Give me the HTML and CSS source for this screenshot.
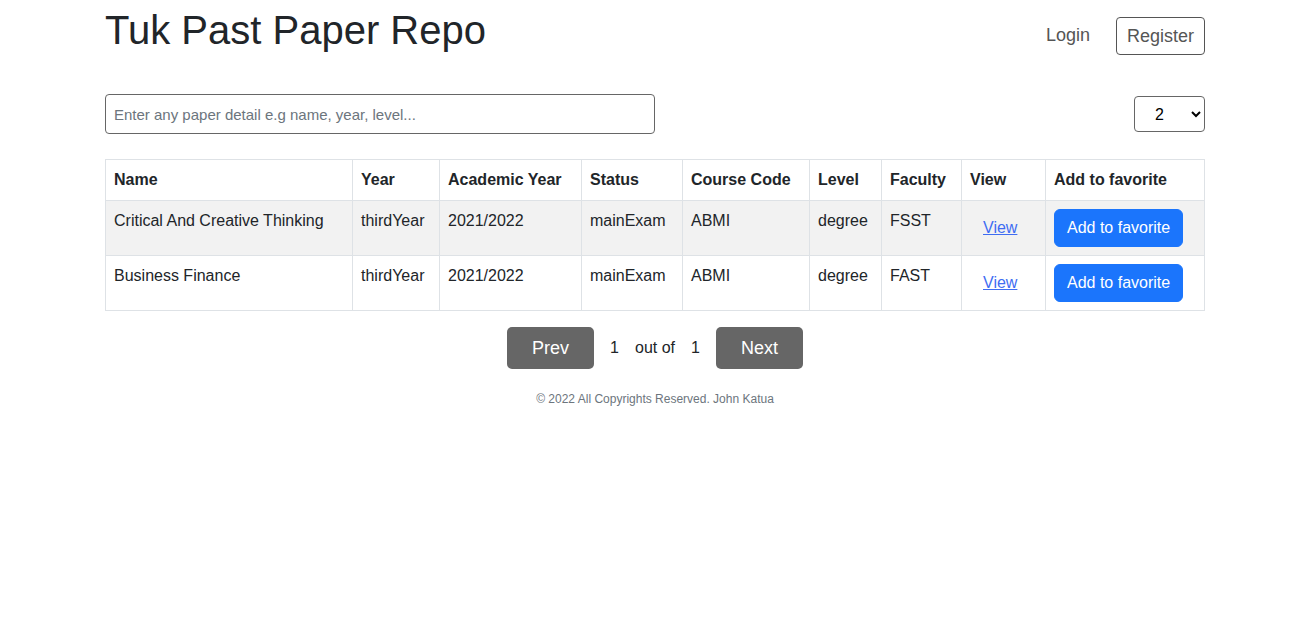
FILE: index.html
```html
<!DOCTYPE html>
<html lang="en">
<head>
<meta charset="utf-8">
<title>Tuk Past Paper Repo</title>
<link rel="stylesheet" href="styles.css">
</head>
<body>
<div class="container">
  <header class="topbar">
    <h1 class="brand">Tuk Past Paper Repo</h1>
    <nav class="auth">
      <a class="login" href="#">Login</a>
      <a class="register" href="#">Register</a>
    </nav>
  </header>

  <div class="searchbar">
    <input class="search" type="text" placeholder="Enter any paper detail e.g name, year, level...">
    <select class="perpage">
      <option>2</option>
    </select>
  </div>

  <table class="papers">
    <thead>
      <tr>
        <th class="c-name">Name</th>
        <th class="c-year">Year</th>
        <th class="c-acad">Academic Year</th>
        <th class="c-status">Status</th>
        <th class="c-code">Course Code</th>
        <th class="c-level">Level</th>
        <th class="c-fac">Faculty</th>
        <th class="c-view">View</th>
        <th class="c-fav">Add to favorite</th>
      </tr>
    </thead>
    <tbody>
      <tr class="striped">
        <td>Critical And Creative Thinking</td>
        <td>thirdYear</td>
        <td>2021/2022</td>
        <td>mainExam</td>
        <td>ABMI</td>
        <td>degree</td>
        <td>FSST</td>
        <td><a class="btn-link" href="#">View</a></td>
        <td><button class="btn-fav">Add to favorite</button></td>
      </tr>
      <tr>
        <td>Business Finance</td>
        <td>thirdYear</td>
        <td>2021/2022</td>
        <td>mainExam</td>
        <td>ABMI</td>
        <td>degree</td>
        <td>FAST</td>
        <td><a class="btn-link" href="#">View</a></td>
        <td><button class="btn-fav">Add to favorite</button></td>
      </tr>
    </tbody>
  </table>

  <div class="pager">
    <button class="pg-btn">Prev</button>
    <span>1</span>
    <span>out of</span>
    <span>1</span>
    <button class="pg-btn">Next</button>
  </div>

  <footer class="foot">© 2022 All Copyrights Reserved. John Katua</footer>
</div>
</body>
</html>
```

FILE: styles.css
```css
* { box-sizing: border-box; }

body {
  margin: 0;
  font-family: "Liberation Sans", Arial, sans-serif;
  font-size: 16px;
  line-height: 1.5;
  color: #212529;
  background: #fff;
}

.container {
  width: 1100px;
  margin: 0 auto;
}

.topbar {
  display: flex;
  justify-content: space-between;
  align-items: flex-start;
  height: 54px;
}

.brand {
  margin: 6px 0 0;
  font-size: 40px;
  font-weight: 400;
  line-height: 48px;
  color: #212529;
}

.auth {
  display: flex;
  align-items: center;
  margin-top: 16px;
}

.login {
  font-size: 18px;
  color: #555;
  text-decoration: none;
  padding: 6px 12px;
  margin-right: 14px;
}

.register {
  font-size: 18px;
  color: #555;
  text-decoration: none;
  border: 1px solid #555;
  border-radius: 4px;
  padding: 0 10px;
  height: 38px;
  line-height: 36px;
  display: inline-block;
}

.searchbar {
  display: flex;
  justify-content: space-between;
  align-items: center;
  margin-top: 40px;
}

.search {
  width: 550px;
  height: 40px;
  border: 1px solid #666;
  border-radius: 4px;
  padding: 0 8px;
  font-family: inherit;
  font-size: 15px;
  color: #212529;
}

.search::placeholder { color: #6c757d; }

.perpage {
  width: 71px;
  height: 36px;
  border: 1px solid #666;
  border-radius: 4px;
  background: #fff;
  font-family: inherit;
  font-size: 16px;
  color: #000;
  padding: 0 8px 0 16px;
}

.papers {
  width: 100%;
  margin-top: 25px;
  border-collapse: collapse;
  vertical-align: top;
}

.papers th,
.papers td {
  border: 1px solid #dee2e6;
  padding: 8px;
  text-align: left;
  vertical-align: top;
}

.papers th { font-weight: 700; }

.papers tr.striped td { background: #f2f2f2; }

.c-name { width: 247px; }
.c-year { width: 87px; }
.c-acad { width: 142px; }
.c-status { width: 101px; }
.c-code { width: 127px; }
.c-level { width: 72px; }
.c-fac { width: 80px; }
.c-view { width: 84px; }

.btn-link {
  display: inline-block;
  padding: 6px 12px;
  line-height: 24px;
  border: 1px solid transparent;
  color: #3f6df2;
  text-decoration: underline;
}

.btn-fav {
  height: 38px;
  padding: 6px 12px;
  border: 1px solid #1b75fc;
  border-radius: 6px;
  background: #1b75fc;
  color: #fff;
  font-family: inherit;
  font-size: 16px;
  line-height: 24px;
}

.pager {
  display: flex;
  justify-content: center;
  align-items: center;
  gap: 16px;
  margin-top: 16px;
}

.pg-btn {
  width: 87px;
  height: 42px;
  border: none;
  border-radius: 5px;
  background: #666;
  color: #fff;
  font-family: inherit;
  font-size: 18px;
}

.foot {
  text-align: center;
  font-size: 12px;
  color: #6c757d;
  margin-top: 21px;
}
```
